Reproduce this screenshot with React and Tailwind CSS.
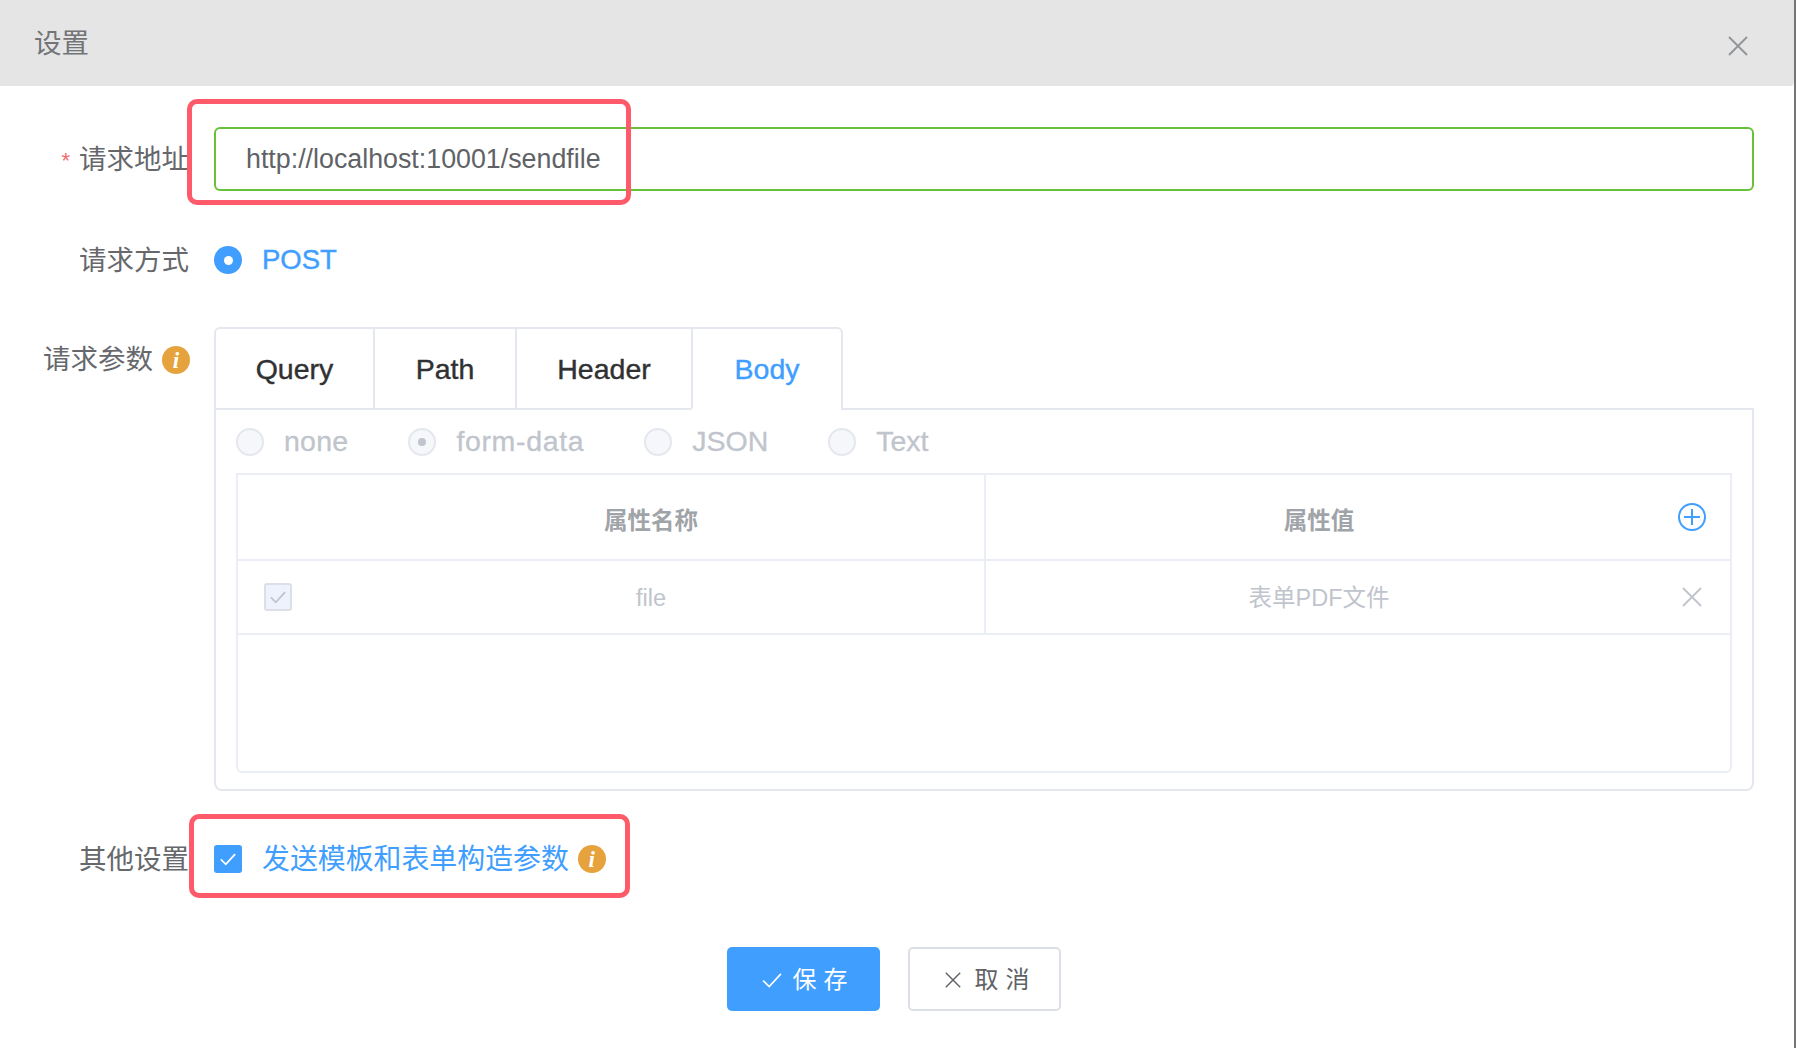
import React from "react";

const labelClass = "flex h-[64px] w-[189px] shrink-0 items-center justify-end pt-[2px] text-[27.5px] text-[#66686c]";

function InfoIcon() {
  return (
    <span className="flex h-[28px] w-[28px] shrink-0 items-center justify-center rounded-full bg-[#e6a23c] font-['Liberation_Serif',serif] text-[23px] font-bold italic leading-none text-white">
      i
    </span>
  );
}

function CloseIcon({ size = 20, color = "#909399" }) {
  return (
    <svg width={size} height={size} viewBox="0 0 20 20" fill="none" stroke={color} strokeWidth="1.8">
      <path d="M1 1L19 19M19 1L1 19" />
    </svg>
  );
}

function CheckIcon({ size = 18, color = "#fff", width = 2 }) {
  return (
    <svg width={size} height={size} viewBox="0 0 18 18" fill="none" stroke={color} strokeWidth={width}>
      <path d="M1 9.5L6.5 15L17 3.5" />
    </svg>
  );
}

function DisabledRadio({ label, checked, textClass = "" }) {
  return (
    <div className="flex items-center gap-[20px]">
      <span className="flex h-[28px] w-[28px] items-center justify-center rounded-full border-2 border-[#e4e7ed] bg-[#f5f7fa]">
        {checked && <span className="h-[8px] w-[8px] rounded-full bg-[#c0c4cc]" />}
      </span>
      <span className={"text-[28.5px] text-[#c0c4cc] [-webkit-text-stroke:0.3px_#c0c4cc] " + textClass}>{label}</span>
    </div>
  );
}

function Tab({ label, className }) {
  return (
    <div className={"flex h-full items-center justify-center border-b-2 pt-[2px] text-[28.5px] [-webkit-text-stroke:0.4px_currentColor] " + className}>
      {label}
    </div>
  );
}

export default function App() {
  return (
    <div className="flex h-[1048px] w-[1796px] overflow-hidden bg-white font-['Liberation_Sans','Noto_Sans_CJK_SC',sans-serif]">
      <div className="flex w-[1794px] flex-col">
        {/* header */}
        <div className="flex h-[86px] shrink-0 items-center justify-between rounded-br-[4px] bg-[#e5e5e5] pl-[34px] pr-[46px]">
          <span className="pt-[2px] text-[27.5px] text-[#727478]">设置</span>
          <span className="mt-[6px]">
            <CloseIcon />
          </span>
        </div>

        <div className="flex flex-col pr-[40px]">
          {/* url */}
          <div className="relative mt-[41px] flex h-[64px] gap-[25px]">
            <label className={labelClass}>
              <span className="mr-[9px] text-[22px] text-[#f56c6c]">*</span>
              请求地址
            </label>
            <div className="flex flex-1 items-center rounded-[6px] border-2 border-[#67c23a] pl-[30px] pt-[1px] text-[26.8px] text-[#606266]">
              http://localhost:10001/sendfile
            </div>
            <div className="absolute left-[187px] top-[-28px] h-[106px] w-[444px] rounded-[10px] border-[5px] border-[#ff5a69]" />
          </div>

          {/* method */}
          <div className="mt-[37px] flex h-[64px] gap-[25px]">
            <label className={labelClass}>请求方式</label>
            <div className="flex items-center gap-[20px]">
              <span className="flex h-[28px] w-[28px] items-center justify-center rounded-full bg-[#409eff]">
                <span className="h-[9px] w-[9px] rounded-full bg-white" />
              </span>
              <span className="text-[27.5px] text-[#409eff] [-webkit-text-stroke:0.4px_#409eff]">POST</span>
            </div>
          </div>

          {/* params */}
          <div className="mt-[35px] flex gap-[25px]">
            <label className={labelClass}>
              <span className="mr-[9px]">请求参数</span>
              <span className="-mr-[1px]">
                <InfoIcon />
              </span>
            </label>
            <div className="flex-1">
              <div className="flex h-[83px] border-b-2 border-[#e4e7ed]">
                <div className="-mb-[2px] flex h-[83px] overflow-hidden rounded-t-[6px] border-x-2 border-t-2 border-[#e4e7ed]">
                  <Tab label="Query" className="w-[157px] border-b-[#e4e7ed] text-[#303133]" />
                  <Tab label="Path" className="w-[142px] border-l-2 border-l-[#e4e7ed] border-b-[#e4e7ed] text-[#303133]" />
                  <Tab label="Header" className="w-[176px] border-l-2 border-l-[#e4e7ed] border-b-[#e4e7ed] text-[#303133]" />
                  <Tab label="Body" className="w-[150px] border-l-2 border-l-[#e4e7ed] border-b-white text-[#409eff]" />
                </div>
              </div>
              <div className="h-[381px] rounded-b-[8px] border-x-2 border-b-2 border-[#e4e7ed] px-[20px]">
                <div className="flex h-[63px] items-center gap-[60px]">
                  <DisabledRadio label="none" textClass="tracking-[0.25px]" />
                  <DisabledRadio label="form-data" checked textClass="tracking-[0.65px]" />
                  <DisabledRadio label="JSON" />
                  <DisabledRadio label="Text" />
                </div>
                <div className="h-[300px] rounded-b-[6px] border-2 border-[#ebeef5]">
                  <div className="flex h-[86px] border-b-2 border-[#ebeef5] text-[23.5px] font-bold text-[#a0a3a8]">
                    <div className="flex w-[748px] items-center justify-center border-r-2 border-[#ebeef5] pl-[80px] pt-[9px]">属性名称</div>
                    <div className="relative flex flex-1 items-center justify-center pr-[78px] pt-[9px]">
                      属性值
                      <svg className="absolute right-[24px] top-[28px]" width="28" height="28" viewBox="0 0 28 28" fill="none" stroke="#409eff" strokeWidth="2">
                        <circle cx="14" cy="14" r="13" />
                        <path d="M14 6V22M6 14H22" />
                      </svg>
                    </div>
                  </div>
                  <div className="flex h-[74px] border-b-2 border-[#ebeef5] text-[23.5px] text-[#c0c4cc]">
                    <div className="relative flex w-[748px] items-center justify-center border-r-2 border-[#ebeef5] pl-[80px] pt-[4px]">
                      <span className="absolute left-[26px] top-[22px] flex h-[28px] w-[28px] items-center justify-center rounded-[3px] border-2 border-[#dcdfe6] bg-[#edf2fc]">
                        <CheckIcon size={16} color="#c0c4cc" />
                      </span>
                      file
                    </div>
                    <div className="relative flex flex-1 items-center justify-center pr-[78px] pt-[4px]">
                      表单PDF文件
                      <span className="absolute right-[28px] top-[26px]">
                        <CloseIcon color="#c0c4cc" />
                      </span>
                    </div>
                  </div>
                </div>
              </div>
            </div>
          </div>

          {/* other */}
          <div className="relative mt-[36px] flex h-[64px] gap-[25px]">
            <label className={labelClass}>其他设置</label>
            <div className="flex items-center">
              <span className="flex h-[28px] w-[28px] items-center justify-center rounded-[3px] bg-[#409eff]">
                <CheckIcon size={16} />
              </span>
              <span className="ml-[20px] pt-[2px] text-[27.9px] text-[#409eff]">发送模板和表单构造参数</span>
              <span className="ml-[9px]">
                <InfoIcon />
              </span>
            </div>
            <div className="absolute left-[189px] top-[-13px] h-[84px] w-[441px] rounded-[10px] border-[5px] border-[#ff5a69]" />
          </div>

          {/* actions */}
          <div className="mt-[56px] flex justify-center gap-[28px] pl-[34px]">
            <button className="flex h-[64px] w-[153px] items-center justify-center gap-[11px] rounded-[5px] bg-[#409eff] pl-[9px] pt-[1px] text-[24px] tracking-[7px] text-white">
              <CheckIcon size={20} color="#fff" width={1.5} />
              <span>保存</span>
            </button>
            <button className="flex h-[64px] w-[153px] items-center justify-center gap-[14px] rounded-[5px] border-2 border-[#dcdfe6] bg-white pl-[12px] pt-[1px] text-[24px] tracking-[7px] text-[#606266]">
              <CloseIcon size={16} color="#606266" />
              <span>取消</span>
            </button>
          </div>
        </div>
      </div>
      <div className="w-[2px] bg-[#757575]" />
    </div>
  );
}
